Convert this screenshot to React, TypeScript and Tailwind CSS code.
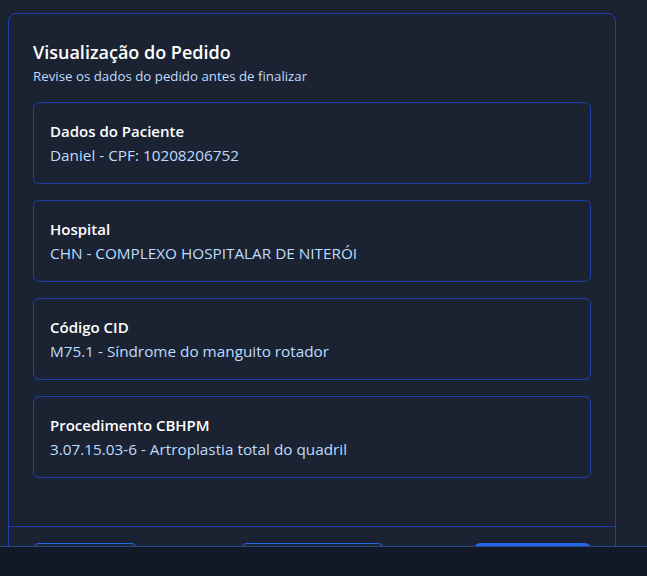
const items = [
  { label: "Dados do Paciente", value: "Daniel - CPF: 10208206752" },
  { label: "Hospital", value: "CHN - COMPLEXO HOSPITALAR DE NITERÓI" },
  { label: "Código CID", value: "M75.1 - Síndrome do manguito rotador" },
  { label: "Procedimento CBHPM", value: "3.07.15.03-6 - Artroplastia total do quadril" },
];

export default function App() {
  return (
    <div
      className="relative h-[576px] w-[647px] overflow-hidden bg-[#1b2333]"
      style={{ fontFamily: '"Segoe UI", "Open Sans", sans-serif' }}
    >
      <div className="ml-2 mt-[13px] w-[608px] rounded-lg border border-[#1e40af] bg-[#1b2333]">
        {/* Header + summary */}
        <div className="px-6 pt-6 pb-12">
          <h2 className="text-lg font-semibold leading-7 text-white">Visualização do Pedido</h2>
          <p className="text-[13.3px] leading-5 text-[#bfdbfe]">Revise os dados do pedido antes de finalizar</p>

          <div className="mt-4 flex flex-col gap-4">
            {items.map((item) => (
              <div key={item.label} className="rounded-md border border-[#1e40af] p-4">
                <p className="text-[15px] font-semibold leading-6 text-white">{item.label}</p>
                <p className="text-[15.3px] leading-6 text-[#bfdbfe]">{item.value}</p>
              </div>
            ))}
          </div>
        </div>

        {/* Footer actions */}
        <div className="grid grid-cols-3 items-center border-t border-[#1e40af] px-6 py-4">
          <button className="h-10 w-[104px] justify-self-start rounded-md border border-[#2563eb] text-sm text-[#bfdbfe]">
            Voltar
          </button>
          <button className="h-10 w-[143px] justify-self-center rounded-md border border-[#2563eb] text-sm text-[#bfdbfe]">
            Salvar rascunho
          </button>
          <button className="h-10 w-[117px] justify-self-end rounded-md bg-[#2563eb] text-sm font-medium text-white">
            Finalizar
          </button>
        </div>
      </div>

      {/* bottom bar over the dialog */}
      <div className="absolute inset-x-0 bottom-0 h-[30px] border-t border-[#25477d] bg-[#111827]" />
    </div>
  );
}
